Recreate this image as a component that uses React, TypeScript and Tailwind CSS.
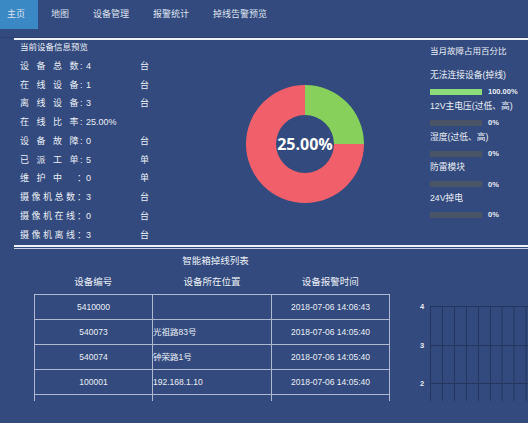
import React from "react";

interface StatRow {
  label: string;
  colon: string;
  value: string;
  unit?: string;
}

interface FaultItem {
  name: string;
  percent: number;
  text: string;
}

interface OfflineRow {
  id: string;
  location: string;
  time: string;
}

const navItems = ["地图", "设备管理", "报警统计", "掉线告警预览"];

const stats: StatRow[] = [
  { label: "设 备 总 数", colon: ":", value: "4", unit: "台" },
  { label: "在 线 设 备", colon: ":", value: "1", unit: "台" },
  { label: "离 线 设 备", colon: ":", value: "3", unit: "台" },
  { label: "在 线 比 率", colon: ":", value: "25.00%" },
  { label: "设 备 故 障", colon: ":", value: "0", unit: "台" },
  { label: "已 派 工 单", colon: ":", value: "5", unit: "单" },
  { label: "维 护 中", colon: "：", value: "0", unit: "单" },
  { label: "摄像机总数", colon: "：", value: "3", unit: "台" },
  { label: "摄像机在线", colon: "：", value: "0", unit: "台" },
  { label: "摄像机离线", colon: "：", value: "3", unit: "台" },
];

const faults: FaultItem[] = [
  { name: "无法连接设备(掉线)", percent: 100, text: "100.00%" },
  { name: "12V主电压(过低、高)", percent: 0, text: "0%" },
  { name: "湿度(过低、高)", percent: 0, text: "0%" },
  { name: "防雷模块", percent: 0, text: "0%" },
  { name: "24V掉电", percent: 0, text: "0%" },
];

const offlineRows: OfflineRow[] = [
  { id: "5410000", location: "", time: "2018-07-06 14:06:43" },
  { id: "540073", location: "光祖路83号", time: "2018-07-06 14:05:40" },
  { id: "540074", location: "钟荣路1号", time: "2018-07-06 14:05:40" },
  { id: "100001", location: "192.168.1.10", time: "2018-07-06 14:05:40" },
  { id: "100002", location: "光明路5号", time: "2018-07-06 14:05:40" },
];

const OnlineDonut: React.FC<{ label: string }> = ({ label }) => (
  <div className="relative h-[118px] w-[118px]">
    <svg width="118" height="118" viewBox="0 0 118 118">
      <path
        d="M59 0 A59 59 0 0 1 118 59 L88 59 A29 29 0 0 0 59 30 Z"
        fill="#87d05b"
      />
      <path
        d="M118 59 A59 59 0 1 1 59 0 L59 30 A29 29 0 1 0 88 59 Z"
        fill="#f1606a"
      />
    </svg>
    <div className="absolute inset-0 flex items-center justify-center font-['Open_Sans',sans-serif] text-[16px] font-bold text-white">
      {label}
    </div>
  </div>
);

const TrendGrid: React.FC = () => {
  const cols = Array.from({ length: 9 }, (_, i) => Math.round((14 + i * 11.95) * 2) / 2 + 0.5);
  const rows = [
    { y: 6.5, label: "4" },
    { y: 45.5, label: "3" },
    { y: 83.5, label: "2" },
  ];
  return (
    <svg width="112" height="102" viewBox="0 0 112 102">
      {rows.map((r) => (
        <line key={r.label} x1="14" x2="112" y1={r.y} y2={r.y} stroke="#24365c" />
      ))}
      {cols.map((x) => (
        <line key={x} x1={x} x2={x} y1="6" y2="102" stroke="#24365c" />
      ))}
      {rows.map((r) => (
        <text
          key={r.label + "t"}
          x="6"
          y={r.y + 2.5}
          textAnchor="middle"
          fontSize="7.5"
          fontWeight="bold"
          fill="#e9edf5"
          fontFamily="Liberation Sans, sans-serif"
        >
          {r.label}
        </text>
      ))}
    </svg>
  );
};

const App: React.FC = () => {
  return (
    <div className="h-[423px] w-[528px] overflow-hidden bg-[#334a7e] font-['Liberation_Sans','Noto_Sans_CJK_SC',sans-serif] text-[#eaeef5]">
      {/* top navigation */}
      <div className="flex h-[38px] border-b border-[#2c4273] text-[9px] text-[#dfe4ee]">
        <div className="flex h-[29px] w-[38px] items-center bg-[#3a89c5] pl-[7px] leading-none">
          主页
        </div>
        <div className="ml-[13px] flex h-[29px] items-center gap-[24px] leading-none">
          {navItems.map((item) => (
            <span key={item}>{item}</span>
          ))}
        </div>
      </div>

      <div className="ml-[14px] border-t-2 border-[#eef1f7]">
        {/* device overview */}
        <div className="flex h-[207px] border-b-2 border-[#eef1f7]">
          <div className="w-[206px] pl-[6px]">
            <div className="mb-[2px] h-[15px] text-[8.5px] leading-[15px]">当前设备信息预览</div>
            {stats.map((row) => (
              <div key={row.label} className="flex h-[18.75px] items-center text-[9px] leading-none">
                <span className="w-[57px] whitespace-pre tracking-[2.5px]">{row.label}</span>
                <span className={`w-[9px] whitespace-nowrap ${row.colon === ":" ? "pl-[3px]" : ""}`}>
                  {row.colon}
                </span>
                <span className="w-[54px]">{row.value}</span>
                <span>{row.unit}</span>
              </div>
            ))}
          </div>

          <div className="ml-[26px] mt-[44.5px]">
            <OnlineDonut label="25.00%" />
          </div>

          <div className="ml-auto w-[98px]">
            <div className="mb-[11px] mt-[5px] h-[12px] text-[8.5px] leading-[12px]">当月故障占用百分比</div>
            {faults.map((f) => (
              <div key={f.name} className="mb-[3.75px]">
                <div className="h-[14px] whitespace-nowrap text-[8.75px] leading-[14px]">{f.name}</div>
                <div className="mt-[7px] flex h-[6px] items-center">
                  <div className="h-[6px] w-[52px] bg-[#4a5467]">
                    <div className="h-full bg-[#8ddc7c]" style={{ width: `${f.percent}%` }} />
                  </div>
                  <span className="ml-[6px] text-[7.5px] font-bold leading-none">{f.text}</span>
                </div>
              </div>
            ))}
          </div>
        </div>

        {/* offline list + trend */}
        <div className="mt-[1px] flex h-[153px] overflow-hidden border-t border-[#c9d1e2]">
          <div className="w-[375px]">
            <div className="ml-[20px] mt-[5px] h-[14px] w-[356px] pl-[7px] text-center text-[9.5px] leading-[14px]">
              智能箱掉线列表
            </div>
            <div className="ml-[20px] flex h-[26px] items-center pt-[2px] text-[9.5px]">
              <span className="w-[119px] text-center">设备编号</span>
              <span className="w-[119px] text-center">设备所在位置</span>
              <span className="w-[118px] text-center">设备报警时间</span>
            </div>
            <div className="ml-[20px] h-[108px] w-[356px] overflow-hidden border-t border-[#aeb8cf]">
              {offlineRows.map((r) => (
                <div
                  key={r.id}
                  className="flex h-[25px] border-b border-l border-[#aeb8cf] text-[8.5px] leading-none"
                >
                  <div className="flex w-[118px] items-center justify-center border-r border-[#aeb8cf]">
                    {r.id}
                  </div>
                  <div className="flex w-[119px] items-center border-r border-[#aeb8cf] whitespace-nowrap">
                    {r.location}
                  </div>
                  <div className="flex w-[118px] items-center justify-center border-r border-[#aeb8cf]">
                    {r.time}
                  </div>
                </div>
              ))}
            </div>
          </div>
          <div className="ml-[27px] mt-[51px]">
            <TrendGrid />
          </div>
        </div>
      </div>
    </div>
  );
};

export default App;
